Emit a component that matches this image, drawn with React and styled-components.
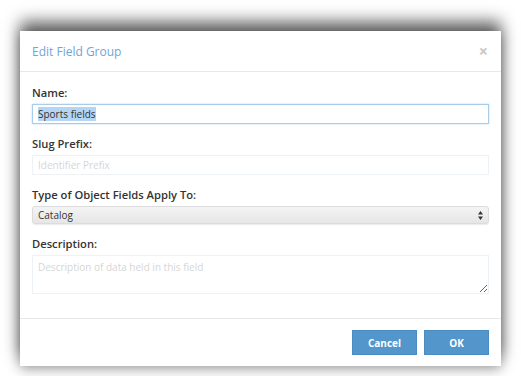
import styled, { createGlobalStyle } from "styled-components";

const GlobalStyle = createGlobalStyle`
  html, body {
    margin: 0;
    padding: 0;
    background: #ffffff;
  }
  body {
    font-family: "Open Sans", "Liberation Sans", sans-serif;
  }
`;

const Page = styled.div`
  width: 521px;
  height: 376px;
  padding: 31px 0 0 20px;
  box-sizing: border-box;
  overflow: hidden;
`;

const Modal = styled.div`
  width: 481px;
  height: 335px;
  background: #fff;
  display: flex;
  flex-direction: column;
  box-shadow: 0 -10px 15px rgba(0, 0, 0, 0.58), 0 3px 12px rgba(0, 0, 0, 0.35);
`;

const Header = styled.div`
  height: 41px;
  box-sizing: border-box;
  padding: 0 13px 0 12px;
  display: flex;
  align-items: center;
  justify-content: space-between;
  border-bottom: 1px solid #e8e8e8;
`;

const Title = styled.h4`
  margin: 0;
  font-size: 12px;
  font-weight: 400;
  color: #6ea6d8;
`;

const Close = styled.span`
  font-size: 16px;
  font-weight: 700;
  color: #c8c8c8;
  line-height: 1;
`;

const Body = styled.div`
  flex: 1;
  padding: 12px 12px 0;
`;

const Group = styled.div`
  display: flex;
  flex-direction: column;
  margin-bottom: 11px;
`;

const Label = styled.label`
  font-size: 11.2px;
  font-weight: 600;
  color: #333;
  line-height: 18px;
  margin-bottom: 2px;
`;

const Input = styled.input`
  height: 20px;
  box-sizing: border-box;
  border: 1px solid #edf2f6;
  padding: 0 5px;
  font-family: inherit;
  font-size: 10px;
  color: #333;
  outline: none;
  &::placeholder {
    color: #d6d6d6;
  }
`;

const Selected = styled.span`
  background: #b5d5f5;
`;

const FocusedInput = styled.div`
  height: 20px;
  box-sizing: border-box;
  border: 1px solid #a9cce9;
  box-shadow: 0 0 2px rgba(102, 175, 233, 0.45);
  padding: 0 5px;
  font-size: 10px;
  color: #333;
  display: flex;
  align-items: center;
`;

const Select = styled.div`
  height: 18px;
  box-sizing: border-box;
  border: 1px solid #dcdcdc;
  border-radius: 3px;
  background: linear-gradient(#f4f4f4, #e6e6e6);
  padding: 0 5px;
  font-size: 10px;
  color: #333;
  display: flex;
  align-items: center;
  justify-content: space-between;
  box-shadow: 0 1px 1px rgba(0, 0, 0, 0.08);
`;

const TextArea = styled.textarea`
  height: 39px;
  box-sizing: border-box;
  border: 1px solid #edf2f6;
  padding: 4px 5px;
  font-family: inherit;
  font-size: 10px;
  resize: vertical;
  outline: none;
  &::placeholder {
    color: #d6d6d6;
  }
`;

const Footer = styled.div`
  height: 48px;
  box-sizing: border-box;
  border-top: 1px solid #e8e8e8;
  padding: 0 12px;
  display: flex;
  align-items: center;
  justify-content: flex-end;
  gap: 7px;
`;

const Button = styled.button`
  width: 65px;
  height: 25px;
  border: 1px solid #4a8cc2;
  background: #5296cb;
  color: #fff;
  font-family: inherit;
  font-size: 10px;
  font-weight: 700;
  padding: 0;
`;

const SelectArrows = () => (
  <svg width="5" height="9" viewBox="0 0 5 9">
    <path d="M2.5 0 L5 3.5 L0 3.5 Z M2.5 9 L5 5.5 L0 5.5 Z" fill="#333" />
  </svg>
);

export default function App() {
  return (
    <>
      <GlobalStyle />
      <Page>
        <Modal>
          <Header>
            <Title>Edit Field Group</Title>
            <Close>×</Close>
          </Header>
          <Body>
            <Group>
              <Label>Name:</Label>
              <FocusedInput>
                <Selected>Sports fields</Selected>
              </FocusedInput>
            </Group>
            <Group>
              <Label>Slug Prefix:</Label>
              <Input placeholder="Identifier Prefix" />
            </Group>
            <Group>
              <Label>Type of Object Fields Apply To:</Label>
              <Select>
                <span>Catalog</span>
                <SelectArrows />
              </Select>
            </Group>
            <Group>
              <Label>Description:</Label>
              <TextArea placeholder="Description of data held in this field" />
            </Group>
          </Body>
          <Footer>
            <Button>Cancel</Button>
            <Button>OK</Button>
          </Footer>
        </Modal>
      </Page>
    </>
  );
}
